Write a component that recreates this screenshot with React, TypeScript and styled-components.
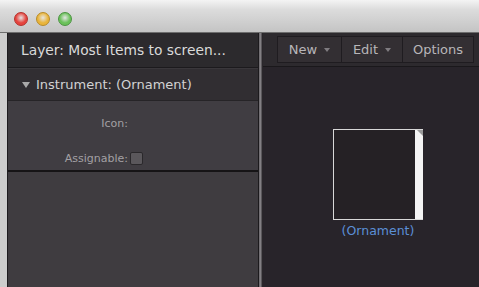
import styled, { createGlobalStyle } from "styled-components";

const GlobalStyle = createGlobalStyle`
  html, body {
    margin: 0;
    padding: 0;
    background: #d4d4d4;
  }
  body {
    font-family: "DejaVu Sans", "Liberation Sans", sans-serif;
  }
`;

const Window = styled.div`
  display: flex;
  flex-direction: column;
  width: 479px;
  height: 287px;
  overflow: hidden;
`;

const TitleBar = styled.div`
  display: flex;
  align-items: flex-start;
  gap: 8px;
  height: 33px;
  padding: 12px 0 0 14px;
  box-sizing: border-box;
  background: linear-gradient(#f4f4f4 0%, #dcdcdc 30%, #c4c4c4 100%);
  border-bottom: 1px solid #6d6d6d;
`;

const Light = styled.span<{ $color: string; $edge: string }>`
  width: 12px;
  height: 12px;
  border-radius: 50%;
  background: radial-gradient(circle at 50% 40%, #fff6 0, ${(p) => p.$color} 55%);
  border: 1px solid ${(p) => p.$edge};
`;

const Body = styled.div`
  display: flex;
  flex: 1;
  min-height: 0;
  padding-left: 7px;
  background: #cdcdcd;
`;

const LeftPanel = styled.div`
  display: flex;
  flex-direction: column;
  width: 250px;
  border-left: 1px solid #1e1c1f;
  background: #3d3a3e;
`;

const PanelHeader = styled.div`
  display: flex;
  align-items: center;
  height: 34px;
  padding-left: 13px;
  background: #2c2a2d;
  border-bottom: 1px solid #1c1a1d;
  color: #dadada;
  font-size: 13.8px;
  white-space: nowrap;
`;

const SectionRow = styled.div`
  display: flex;
  align-items: center;
  gap: 6px;
  height: 31px;
  padding-left: 14px;
  background: #312e32;
  border-top: 1px solid #3a373b;
  border-bottom: 1px solid #262427;
  color: #d2d2d2;
  font-size: 13px;
`;

const Disclosure = styled.span`
  width: 0;
  height: 0;
  border-left: 4px solid transparent;
  border-right: 4px solid transparent;
  border-top: 6px solid #a9a9a9;
`;

const Inspector = styled.div`
  display: grid;
  grid-template-columns: 122px 1fr;
  row-gap: 22px;
  align-items: center;
  padding: 16px 0 5px;
  background: #403d42;
  border-bottom: 2px solid #161416;
  font-size: 11px;
  color: #a3a0a4;
`;

const FieldLabel = styled.span`
  text-align: right;
  padding-right: 2px;
`;

const Checkbox = styled.span`
  width: 11px;
  height: 11px;
  border-radius: 2px;
  background: #5a575b;
  border: 1px solid #2a282b;
`;

const PanelRest = styled.div`
  flex: 1;
  background: #3f3c40;
`;

const Divider = styled.div`
  width: 5px;
  background: linear-gradient(90deg, #1c1a1d 0, #1c1a1d 1px, #6a676b 1px, #8a878b 3px, #2a272b 4px);
`;

const RightPanel = styled.div`
  display: flex;
  flex-direction: column;
  flex: 1;
  background: #28242a;
`;

const Toolbar = styled.div`
  display: flex;
  align-items: center;
  height: 34px;
  padding-left: 15px;
  box-sizing: border-box;
  background: #2d2a2e;
  border-bottom: 1px solid #1a181b;
`;

const ToolButton = styled.button<{ $width: number }>`
  display: flex;
  align-items: center;
  justify-content: center;
  gap: 7px;
  width: ${(p) => p.$width}px;
  height: 27px;
  padding: 0;
  margin-left: -1px;
  background: #332f33;
  border: 1px solid #1f1c20;
  color: #b8b6b9;
  font-family: "DejaVu Sans", "Liberation Sans", sans-serif;
  font-size: 13px;
`;

const Caret = styled.span`
  width: 0;
  height: 0;
  border-left: 3px solid transparent;
  border-right: 3px solid transparent;
  border-top: 4px solid #7f7c80;
`;

const Canvas = styled.div`
  display: flex;
  flex: 1;
  justify-content: center;
  padding-top: 62px;
  padding-left: 14px;
`;

const Node = styled.div`
  display: flex;
  flex-direction: column;
  align-items: center;
  gap: 3px;
`;

const NodeFrame = styled.div`
  position: relative;
  display: flex;
  justify-content: flex-end;
  width: 89px;
  height: 89px;
  border: 1px solid #d8d8d8;
  border-right: none;
  background: #252125;
`;

const NodeBar = styled.div`
  width: 8px;
  background: #f4f4f4;
`;

const NodeCorner = styled.span`
  position: absolute;
  top: 0;
  right: 0;
  width: 0;
  height: 0;
  border-left: 6px solid transparent;
  border-top: 6px solid #9a9a9a;
`;

const NodeLabel = styled.span`
  color: #5b8fd6;
  font-size: 12.5px;
`;

export default function App() {
  return (
    <Window>
      <GlobalStyle />
      <TitleBar>
        <Light $color="#e5433d" $edge="#b4302b" />
        <Light $color="#e9b43a" $edge="#b88a26" />
        <Light $color="#6ac15a" $edge="#4a9340" />
      </TitleBar>
      <Body>
        <LeftPanel>
          <PanelHeader>Layer: Most Items to screen...</PanelHeader>
          <SectionRow>
            <Disclosure />
            Instrument: (Ornament)
          </SectionRow>
          <Inspector>
            <FieldLabel>Icon:</FieldLabel>
            <span />
            <FieldLabel>Assignable:</FieldLabel>
            <Checkbox />
          </Inspector>
          <PanelRest />
        </LeftPanel>
        <Divider />
        <RightPanel>
          <Toolbar>
            <ToolButton $width={65}>
              New <Caret />
            </ToolButton>
            <ToolButton $width={62}>
              Edit <Caret />
            </ToolButton>
            <ToolButton $width={72}>Options</ToolButton>
          </Toolbar>
          <Canvas>
            <Node>
              <NodeFrame>
                <NodeBar />
                <NodeCorner />
              </NodeFrame>
              <NodeLabel>(Ornament)</NodeLabel>
            </Node>
          </Canvas>
        </RightPanel>
      </Body>
    </Window>
  );
}
